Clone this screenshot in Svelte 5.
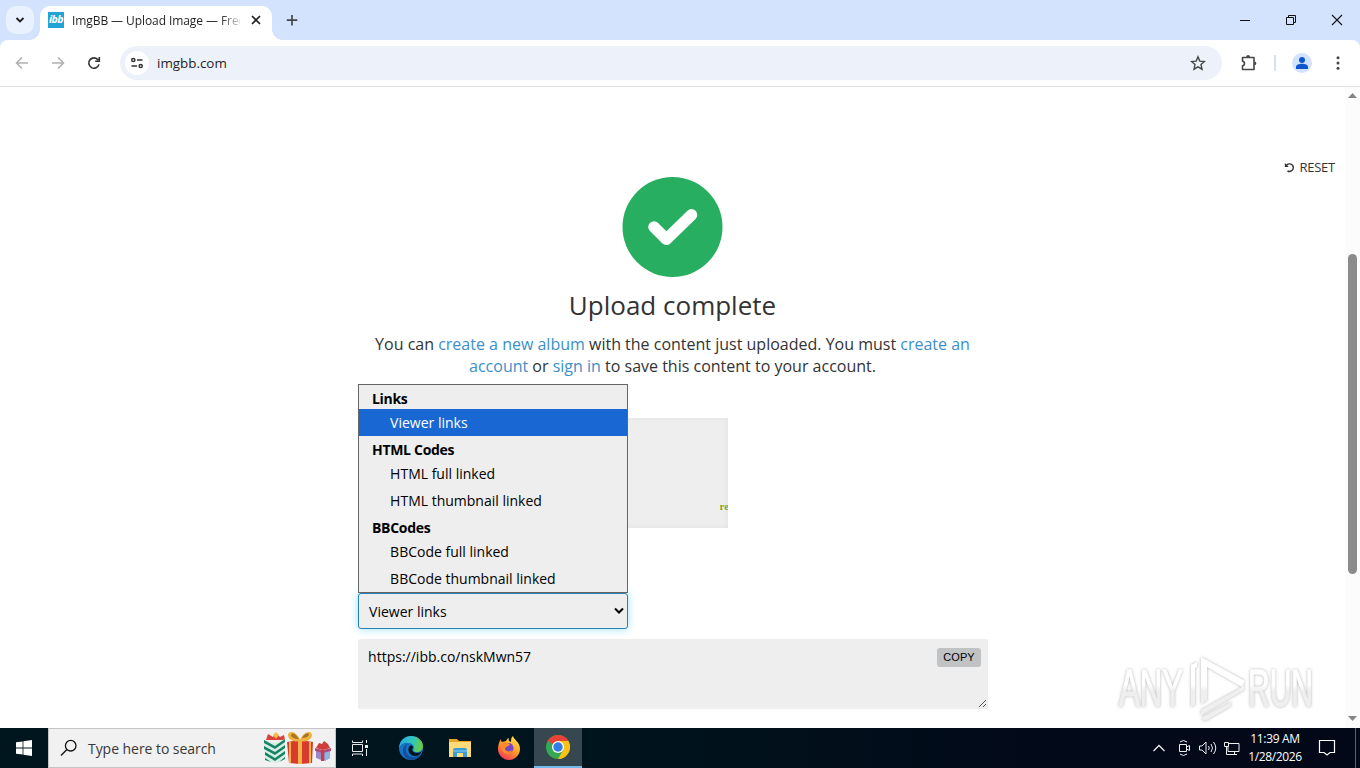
<script>
  let url = 'imgbb.com';
  let selected = 'Viewer links';

  const groups = [
    { label: 'Links', options: ['Viewer links'] },
    { label: 'HTML Codes', options: ['HTML full linked', 'HTML thumbnail linked'] },
    { label: 'BBCodes', options: ['BBCode full linked', 'BBCode thumbnail linked'] }
  ];
</script>

<style>
  :global(body) {
    margin: 0;
    overflow: hidden;
  }

  .screen {
    display: flex;
    flex-direction: column;
    width: 1360px;
    height: 768px;
    background: #fff;
    font-family: "Open Sans", "Noto Sans", sans-serif;
    color: #333;
  }

  svg {
    display: block;
    flex: none;
  }

  /* browser chrome */
  .browser {
    background: #d3e3fd;
  }

  .tabs {
    display: flex;
    height: 40px;
  }

  .search-tabs {
    display: grid;
    place-items: center;
    width: 28px;
    height: 28px;
    margin: 6px 6px 0;
    border-radius: 10px;
    background: #e9f1fe;
  }

  .tab {
    position: relative;
    display: flex;
    align-items: center;
    box-sizing: border-box;
    width: 232px;
    height: 34px;
    margin-top: 6px;
    padding: 0 9px 6px 8px;
    border-radius: 10px 10px 0 0;
    background: #fff;
  }

  .tab::before, .tab::after {
    content: '';
    position: absolute;
    bottom: 0;
    width: 10px;
    height: 10px;
  }

  .tab::before {
    left: -10px;
    background: radial-gradient(circle at 0 0, transparent 9.5px, #fff 10px);
  }

  .tab::after {
    right: -10px;
    background: radial-gradient(circle at 100% 0, transparent 9.5px, #fff 10px);
  }

  .favicon {
    width: 16px;
    height: 16px;
    background: #22a5d6;
    color: #fff;
    font: italic bold 10.5px/15px "Open Sans", sans-serif;
    letter-spacing: -.6px;
    text-align: center;
  }

  .title {
    width: 168px;
    margin-left: 8px;
    overflow: hidden;
    color: #1f1f1f;
    font-size: 12px;
    letter-spacing: -.08px;
    white-space: nowrap;
    -webkit-mask-image: linear-gradient(90deg, #000 148px, transparent 172px);
    mask-image: linear-gradient(90deg, #000 148px, transparent 172px);
  }

  .close {
    margin-left: auto;
  }

  .plus {
    margin: 12px 0 0 12px;
  }

  .window-buttons {
    display: flex;
    gap: 30px;
    margin: 12px 15px 0 auto;
  }

  .toolbar {
    display: flex;
    align-items: center;
    box-sizing: border-box;
    height: 47px;
    padding: 0 14px;
    border-bottom: 1px solid #dfe1e5;
    border-radius: 8px 8px 0 0;
    background: #fff;
  }

  .nav {
    display: flex;
    gap: 20px;
  }

  .address {
    display: flex;
    align-items: center;
    box-sizing: border-box;
    width: 1102px;
    height: 34px;
    margin-left: 18px;
    padding: 0 16px 0 5px;
    border-radius: 17px;
    background: #edf1fa;
    color: #1f1f1f;
    font-size: 13.4px;
  }

  .site-info {
    display: grid;
    place-items: center;
    width: 24px;
    height: 24px;
    margin-right: 8px;
    border-radius: 50%;
    background: #fff;
  }

  .star {
    margin-left: auto;
  }

  .divider {
    width: 2px;
    height: 16px;
    margin: 0 16px;
    background: #d8e0ee;
  }

  .puzzle {
    margin-left: 18px;
  }

  .dots {
    margin-left: auto;
  }

  /* page */
  .viewport {
    display: flex;
    height: 641px;
  }

  .page {
    position: relative;
    flex: 1;
    padding-top: 70px;
  }

  .reset {
    display: flex;
    justify-content: flex-end;
    align-items: center;
    gap: 4px;
    height: 20px;
    padding-right: 10px;
    font-size: 13px;
    letter-spacing: -.25px;
  }

  .check {
    margin: 0 auto;
  }

  h1 {
    margin: 10px 0 0;
    font-size: 26px;
    font-weight: 400;
    line-height: 36px;
    text-align: center;
  }

  .hint {
    width: 630px;
    margin: 10px auto 0;
    font-size: 16px;
    line-height: 22px;
    text-align: center;
  }

  .hint a {
    color: #3c8fc9;
    text-decoration: none;
  }

  .thumb {
    display: flex;
    justify-content: flex-end;
    align-items: flex-end;
    box-sizing: border-box;
    width: 110px;
    height: 110px;
    margin: 41px auto 0;
    padding: 0 0 16px;
    overflow: hidden;
    background: #eee;
    box-shadow: inset 0 0 6px rgba(0, 0, 0, .06);
    color: #8ea317;
    font: bold 11px/12px "Liberation Serif", serif;
  }

  .thumb span {
    width: 8px;
    overflow: hidden;
  }

  .codes {
    position: relative;
    width: 630px;
    margin: 65px auto 0;
    color: #000;
    font-size: 14px;
  }

  .select {
    display: flex;
    justify-content: space-between;
    align-items: center;
    box-sizing: border-box;
    width: 270px;
    height: 36px;
    padding: 0 3px 0 10.6px;
    border: 1px solid #2980b9;
    border-radius: 3px;
    background: #eee;
    box-shadow: 0 0 8px rgba(0, 180, 255, .4);
  }

  .menu {
    position: absolute;
    left: 0;
    bottom: 116px;
    box-sizing: border-box;
    width: 270px;
    height: 209px;
    border: 1px solid #666;
    background: #eee;
  }

  .group {
    height: 24px;
    padding: 0 13.5px;
    font-weight: 700;
    line-height: 28px;
    letter-spacing: -.3px;
  }

  .option {
    height: 27px;
    padding-left: 31.6px;
    line-height: 27px;
  }

  .option.active {
    background: #1967d2;
    color: #fff;
  }

  .output {
    display: flex;
    justify-content: space-between;
    position: relative;
    box-sizing: border-box;
    height: 70px;
    margin-top: 10px;
    padding: 8px 7px 0 10.6px;
    border-radius: 2px;
    background: #eee;
    line-height: 19px;
  }

  .copy {
    width: 44px;
    height: 19px;
    margin-top: 1px;
    padding: 0 0 0 1px;
    border: 0;
    border-radius: 3px;
    background: #c0c2c4;
    color: #000;
    font: 11px/19px "Liberation Sans", Arial, sans-serif;
    letter-spacing: .1px;
  }

  .grip {
    position: absolute;
    right: 1px;
    bottom: 1px;
  }

  .watermark {
    position: absolute;
    right: 27px;
    bottom: 2px;
  }

  .scrollbar {
    display: flex;
    flex-direction: column;
    justify-content: space-between;
    align-items: center;
    box-sizing: border-box;
    width: 15px;
    padding: 6px 0 7px;
    background: #fcfcfc;
  }

  .track {
    flex: 1;
    padding-top: 156px;
  }

  .handle {
    width: 9px;
    height: 320px;
    border-radius: 5px;
    background: #8b8b8b;
  }

  /* taskbar */
  .taskbar {
    display: flex;
    height: 40px;
    background: linear-gradient(90deg, #00161e, #00141d 45%, #020a19 75%, #020817);
    color: #fff;
  }

  .start, .app {
    display: grid;
    place-items: center;
    width: 48px;
    height: 40px;
  }

  .search {
    display: flex;
    align-items: center;
    box-sizing: border-box;
    width: 288px;
    border: 1px solid #c4c4c4;
    background: #f1f1f1;
    color: #383838;
    font-size: 14px;
    letter-spacing: -.05px;
  }

  .magnifier {
    margin: 0 10px 0 11px;
  }

  .gifts {
    margin: 0 3px 0 auto;
  }

  .apps {
    display: flex;
    gap: 1px;
  }

  .apps .app:first-child {
    margin-right: 2px;
  }

  .current {
    box-sizing: border-box;
    border-bottom: 2px solid #76b9ed;
    background: #36474f;
  }

  .tray {
    display: flex;
    align-items: center;
    margin-left: auto;
  }

  .clock {
    width: 64px;
    margin: 0 11px 0 3px;
    font-size: 12px;
    line-height: 18px;
    letter-spacing: -.35px;
    text-align: center;
    white-space: nowrap;
  }

  .peek {
    height: 40px;
    margin-left: 19px;
    padding-right: 4px;
    border-left: 1px solid #59616e;
  }
</style>

<div class="screen">
  <div class="browser">
    <div class="tabs">
      <div class="search-tabs">
        <svg width="10" height="10" viewBox="0 0 10 10" fill="none" stroke="#1f1f1f" stroke-width="1.8"><path d="M1.5 3 5 6.5 8.5 3" /></svg>
      </div>
      <div class="tab">
        <div class="favicon">ibb</div>
        <div class="title">ImgBB — Upload Image — Free Image</div>
        <svg class="close" width="14" height="14" viewBox="0 0 14 14" stroke="#1f1f1f" stroke-width="1.6"><path d="m3 3 8 8M11 3l-8 8" /></svg>
      </div>
      <svg class="plus" width="16" height="16" viewBox="0 0 16 16" stroke="#444746" stroke-width="1.7"><path d="M8 3v10.5M2.8 8.2h10.5" /></svg>
      <div class="window-buttons">
        <svg width="16" height="16" viewBox="0 0 16 16" stroke="#111"><path d="M3 8.5h10" /></svg>
        <svg width="16" height="16" viewBox="0 0 16 16" fill="none" stroke="#111"><path d="M3.5 5.5h7v7h-7zM5.5 5.5v-2h7v7h-2" /></svg>
        <svg width="16" height="16" viewBox="0 0 16 16" stroke="#111" stroke-width="1.1"><path d="m3 3 10 10M13 3 3 13" /></svg>
      </div>
    </div>

    <div class="toolbar">
      <div class="nav">
        <svg width="16" height="16" viewBox="0 0 16 16" fill="none" stroke="#aeb0b2" stroke-width="1.6"><path d="M14 8H3M8 2.5 2.5 8 8 13.5" /></svg>
        <svg width="16" height="16" viewBox="0 0 16 16" fill="none" stroke="#aeb0b2" stroke-width="1.6"><path d="M2 8h11M8 2.5 13.5 8 8 13.5" /></svg>
        <svg width="16" height="16" viewBox="0 0 16 16" fill="none" stroke="#333" stroke-width="1.6"><path d="M13 9.4A5.2 5.2 0 1 1 12.2 5M13.3 2v4.300H9.2" /></svg>
      </div>
      <div class="address">
        <div class="site-info">
          <svg width="14" height="14" viewBox="0 0 14 14" fill="none" stroke="#333" stroke-width="1.5"><circle cx="3.3" cy="4" r="1.6" /><path d="M7 4h5.5M1.5 10H7" /><circle cx="10.7" cy="10" r="1.6" /></svg>
        </div>
        <span>{url}</span>
        <svg class="star" width="16" height="16" viewBox="0 0 16 16" fill="none" stroke="#444746" stroke-width="1.4"><path d="m8 1.8 1.8 4.300 4.700.4-3.500 3.100 1 4.600L8 11.800l-4 2.400 1-4.600-3.500-3.100 4.700-.4z" /></svg>
      </div>
      <svg class="puzzle" width="18" height="18" viewBox="0 0 18 18" fill="none" stroke="#444746" stroke-width="1.6"><path d="M2.500 3.500h11.500v12H2.500v-3.800c2.600-.2 2.600-4.200 0-4.400z" stroke-linejoin="round" /><path d="M6.200 3a1.900 1.900 0 0 1 3.800 0M14.500 7.400a1.900 1.900 0 0 1 0 3.800" fill="#444746" stroke="none" /></svg>
      <div class="divider"></div>
      <svg width="20" height="20" viewBox="0 0 20 20"><circle cx="10" cy="10" r="10" fill="#d3e3fd" /><circle cx="10" cy="7" r="3" fill="#0b57d0" /><path d="M4 16v-2c0-2.300 3-3.200 6-3.200s6 .9 6 3.200v2z" fill="#0b57d0" /></svg>
      <svg class="dots" width="16" height="16" viewBox="0 0 16 16" fill="#444746"><circle cx="8" cy="2.7" r="1.5" /><circle cx="8" cy="8" r="1.5" /><circle cx="8" cy="13.3" r="1.5" /></svg>
    </div>
  </div>

  <div class="viewport">
    <div class="page">
      <div class="reset">
        <svg width="11" height="11" viewBox="0 0 11 11" fill="none" stroke="#333" stroke-width="1.4"><path d="M2.500 3.200C5 .8 9.300 2 9.300 5.700c0 3-3.200 4.600-5.800 3.300" /><path d="M.8 1v4h4z" fill="#333" stroke="none" /></svg>
        <span>RESET</span>
      </div>
      <svg class="check" width="101" height="100" viewBox="0 0 101 100"><circle cx="50.5" cy="50" r="50" fill="#27ae60" /><path d="M32 50 44.300 62.300 69.500 37.800" fill="none" stroke="#fff" stroke-width="11.5" stroke-linecap="round" stroke-linejoin="round" /></svg>
      <h1>Upload complete</h1>
      <div class="hint">
        You can <a href="#album">create a new album</a> with the content just uploaded. You must <a href="#signup">create an account</a> or <a href="#login">sign in</a> to save this content to your account.
      </div>
      <div class="thumb"><span>re</span></div>

      <div class="codes">
        <div class="select">
          <span>{selected}</span>
          <svg width="10" height="8" viewBox="0 0 10 8" fill="none" stroke="#000" stroke-width="2"><path d="m1 1.500 4 4 4-4" /></svg>
        </div>
        <div class="output">
          <span>https://ibb.co/nskMwn57</span>
          <button class="copy">COPY</button>
          <svg class="grip" width="9" height="9" viewBox="0 0 9 9" stroke="#555"><path d="m1 8 7-7M5 8l3-3" /></svg>
        </div>
        <div class="menu">
          {#each groups as group}
            <div class="group">{group.label}</div>
            {#each group.options as option}
              <div class="option" class:active={option === selected}>{option}</div>
            {/each}
          {/each}
        </div>
      </div>

      <svg class="watermark" width="204" height="76" viewBox="0 0 204 76">
        <defs>
          <linearGradient id="fade" gradientUnits="userSpaceOnUse" x1="0" y1="8" x2="0" y2="68">
            <stop offset=".45" stop-color="#fff" />
            <stop offset=".55" stop-color="#efefef" />
          </linearGradient>
          <filter id="glow" x="-10%" y="-10%" width="120%" height="120%">
            <feDropShadow dx="0" dy="0" stdDeviation="1.8" flood-color="#777" flood-opacity=".6" />
          </filter>
        </defs>
        <g filter="url(#glow)" fill="url(#fade)" stroke="url(#fade)" font-family="Liberation Sans" font-size="51">
          <text x="5" y="56" textLength="64" lengthAdjust="spacingAndGlyphs">ANY</text>
          <text x="134" y="56" textLength="65" lengthAdjust="spacingAndGlyphs">RUN</text>
          <path d="m87 7 44 24-3 6-35-20v33l-6 4zM77 15l6-3v5l-2 1v37l-4 2zM87 60l43-24v4L87 65zM87 68l30-16v4L91 71z" stroke="none" />
        </g>
      </svg>
    </div>

    <div class="scrollbar">
      <svg width="9" height="5" viewBox="0 0 9 5" fill="#858585"><path d="m0 5 4.500-5L9 5z" /></svg>
      <div class="track">
        <div class="handle"></div>
      </div>
      <svg width="9" height="5" viewBox="0 0 9 5" fill="#858585"><path d="m0 0 4.500 5L9 0z" /></svg>
    </div>
  </div>

  <div class="taskbar">
    <div class="start">
      <svg width="16" height="16" viewBox="0 0 16 16" fill="#fff"><path d="m0 2.300 6.600-.9v6.200H0zM7.400 1.300 16 0v7.600H7.400zM0 8.400h6.600v6.200L0 13.700zM7.400 8.400H16V16l-8.600-1.300z" /></svg>
    </div>
    <div class="search">
      <svg class="magnifier" width="18" height="18" viewBox="0 0 18 18" fill="none" stroke="#111" stroke-width="1.3"><circle cx="10.7" cy="6.7" r="5.3" /><path d="M6.900 10.500 1 16.500" /></svg>
      <span>Type here to search</span>
      <svg class="gifts" width="69" height="34" viewBox="0 0 69 34">
        <path d="m3 9 2-6 5 3 3-4 4 4 4-2 1 5z" fill="#d9413b" />
        <path d="m10 4 3-3 3 3-3 4z" fill="#f0c04a" />
        <path d="m1 9 11 3 10-4v20l-9 4-11-3z" fill="#d7efe3" />
        <path d="m1 9 11 6 10-7v3l-10 7L1 12zM1 15l11 6 10-7v3l-10 7-11-6zM2 21l10 6 10-7v3l-10 7-10-6zM2 27l6 4-6-2zM22 26v2l-6 3z" fill="#168266" />
        <path d="m24 11 13-2 13 2-1 21-12 1-11-1z" fill="#d83a2e" />
        <path d="M35 9h4v24h-4zM26 11h2v21h-2zM46 11h2v21h-2z" fill="#f3b348" />
        <path d="M37 10C25 13 22 1 28 1c5 0 8 5 9 8 1-3 5-9 10-8 5 2 0 12-10 9z" fill="#efb33d" />
        <path d="M36 8c-3-5-7-7-8-4 0 2 3 4 8 4zM39 7c2-4 6-6 7-4 0 3-4 4-7 4z" fill="#a77527" />
        <path d="M53 19h14v8l-6 3-8-3z" fill="#9b86c7" />
        <path d="M62 19h5v8l-5 3z" fill="#8cb5e0" />
        <path d="M52 17l8 2 8-2v3l-8 2-8-2z" fill="#b04e78" />
        <path d="M58 19h3v11h-3zM53 17l3-5 3 1 2-3 4 3 2 4-7 2z" fill="#cf3d3a" />
      </svg>
    </div>
    <div class="apps">
      <div class="app">
        <svg width="18" height="18" viewBox="0 0 18 18" fill="none" stroke="#e7eaec"><path d="M1.500 1.500v2h10v-2M1.500 5.500h10v7h-10zM1.500 17v-2h10v2M15.500 1v3M15.500 10v7" /><path d="M14 6h3v3h-3z" fill="#e7eaec" stroke="none" /></svg>
      </div>
      <div class="app">
        <svg width="26" height="26" viewBox="0 0 26 26">
          <defs>
            <linearGradient id="edge" x1="0" x2="1" y2=".2"><stop stop-color="#2aa8e0" /><stop offset=".6" stop-color="#30c6bd" /><stop offset="1" stop-color="#66cc4b" /></linearGradient>
          </defs>
          <circle cx="13" cy="13" r="12" fill="#1574c5" />
          <path d="M1 13C2 5 7 1 13 1c7 0 12 5 12 10 0 4-3 6-6 6-4 0-4-2-3-4 0-3-2-5-6-5-4-1-8 2-9 5z" fill="url(#edge)" />
          <path d="M10 9c-3 3-3 8 0 11 3 3 8 3 13-1-3 5-7 6-10 6-6-1-9-7-8-11 1-3 3-5 5-5z" fill="#144f9b" />
          <path d="M15 13c-2 2 0 5 4 5 2 0 4-1 5-2-1 3-4 5-7 5-5 0-8-5-6-9 1-2 4-2 4 1z" fill="#00141d" />
        </svg>
      </div>
      <div class="app">
        <svg width="22" height="20" viewBox="0 0 22 20"><path d="M0 1h8l2 2h12v5H0z" fill="#e8a623" /><path d="M0 4h22v15H0z" fill="#ffda79" /><path d="M4 12q0-2 2-2h10q2 0 2 2v7h-4v-4H8v4H4z" fill="#3b9bd8" /><path d="M4 12h14v2H4z" fill="#5fb6e4" /></svg>
      </div>
      <div class="app">
        <svg width="24" height="24" viewBox="0 0 24 24">
          <defs>
            <linearGradient id="fox" x1=".8" y1="0" x2=".2" y2="1"><stop stop-color="#ffe94a" /><stop offset=".5" stop-color="#ff9a26" /><stop offset="1" stop-color="#f32c62" /></linearGradient>
          </defs>
          <path d="M4 3c0 2 0 2 1 3l4-1c1-2 2-3 3-3-1 2 0 3 2 4 0-3 0-4 2-6 1 4 7 6 7 13 0 6-5 11-11 11S1 19 1 13c0-4 1-7 3-10z" fill="url(#fox)" />
          <circle cx="11.5" cy="12" r="5" fill="#7646c9" />
          <path d="M5 7c4-2 6 1 8 1-1 3-5 2-5 5 1 3 5 3 7 1-1 5-8 5-10 0-1-3-1-5 0-7z" fill="#ff8b26" />
        </svg>
      </div>
      <div class="app current">
        <svg width="24" height="24" viewBox="0 0 24 24">
          <circle cx="12" cy="12" r="12" fill="#34a853" />
          <path d="M12 12 1.600 6A12 12 0 0 1 22.400 6z" fill="#ea4335" />
          <path d="M12 6h10.400A12 12 0 0 1 12 24l5.200-9z" fill="#fbc116" />
          <circle cx="12" cy="12" r="6" fill="#fff" /><circle cx="12" cy="12" r="4.7" fill="#327ce8" />
        </svg>
      </div>
    </div>
    <div class="tray">
      <svg width="88" height="20" viewBox="0 0 88 20" fill="none" stroke="#eceef2">
        <path d="m1.500 13 5.500-5.500L12.500 13" stroke-width="1.3" />
        <path d="M27.500 6.500h7v7h-7zM34.500 9l3-1.500v5l-3-1.500M28 4q3.500-3 7 0M28 16q3.500 3 7 0" />
        <path d="M47.500 8h2.500l4-4v12l-4-4h-2.500zM56.500 8q1.500 2 0 4M59 6q3 4 0 8M61.500 4q4.500 6 0 12" />
        <path d="M77 5.500h10v8H76v-5M79 16.500h6M82.500 13.500v3M72.500 4.500h4v4h-4zM74.500 8.500v8H79" />
      </svg>
      <div class="clock">11:39 AM<br />1/28/2026</div>
      <svg width="18" height="18" viewBox="0 0 18 18" fill="none" stroke="#fff" stroke-width="1.2"><path d="M1.500 1.500h15v12h-4.500L9 16l-3-2.500H1.500z" /></svg>
      <div class="peek"></div>
    </div>
  </div>
</div>
